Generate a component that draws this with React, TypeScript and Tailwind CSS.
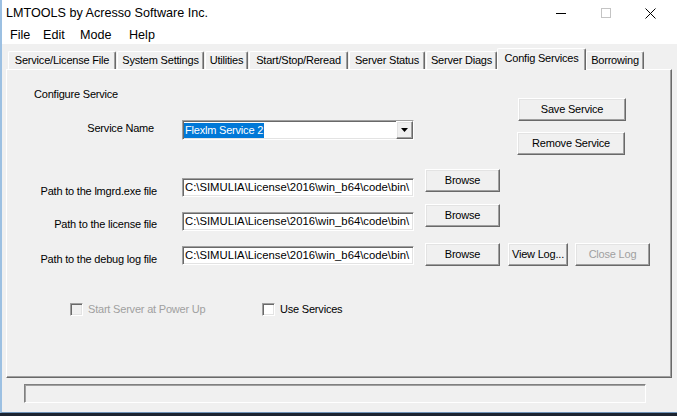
import React from "react";

const raised =
  "border border-t-white border-l-white border-r-[#696969] border-b-[#696969] shadow-[inset_-1px_-1px_0_#a0a0a0,inset_1px_1px_0_#e3e3e3] bg-[#f0f0f0] flex items-center justify-center text-[11px] tracking-[-0.2px] leading-[13px]";
const sunken =
  "border border-t-[#a0a0a0] border-l-[#a0a0a0] border-r-white border-b-white shadow-[inset_1px_1px_0_#696969,inset_-1px_-1px_0_#e3e3e3]";

const tabs = [
  { label: "Service/License File", cls: "w-[108px] mr-[1px]" },
  { label: "System Settings", cls: "w-[87px] mr-[1px]" },
  { label: "Utilities", cls: "w-[43px] mr-[1px]" },
  { label: "Start/Stop/Reread", cls: "w-[99px] mr-[1px]" },
  { label: "Server Status", cls: "w-[76px] mr-[1px]" },
  { label: "Server Diags", cls: "w-[71px]" },
  { label: "Config Services", cls: "w-[89px]", sel: true },
  { label: "Borrowing", cls: "w-[58px]" },
];

const PATH = "C:\\SIMULIA\\License\\2016\\win_b64\\code\\bin\\";

function PathInput({ cls }: { cls: string }) {
  return (
    <div className={`${sunken} ${cls} ml-[25px] w-[232px] h-[19px] bg-white overflow-hidden whitespace-nowrap flex items-center pl-[2px] text-[11.3px] tracking-normal leading-[13px]`}>
      {PATH}
    </div>
  );
}

export default function App() {
  return (
    <div className="w-[677px] h-[416px] bg-[#1c2430] overflow-hidden font-['Liberation_Sans',Arial,sans-serif] text-black select-none">
      <div className="h-[413px] bg-[#f0f0f0] border-l-2 border-l-[#9cc0e2] border-b border-b-[#6f93b8] flex flex-col">
        {/* Title bar */}
        <div className="h-[26px] bg-white flex items-center shrink-0">
          <span className="pl-[4px] text-[12.6px] leading-[16px]">LMTOOLS by Acresso Software Inc.</span>
          <div className="ml-auto flex h-full pr-[4px]">
            <div className="w-[45px] h-full flex items-center justify-center">
              <svg width="10" height="10" viewBox="0 0 10 10">
                <line x1="0" y1="5.5" x2="10" y2="5.5" stroke="#000" strokeWidth="1" />
              </svg>
            </div>
            <div className="w-[45px] h-full flex items-center justify-center">
              <svg width="10" height="10" viewBox="0 0 10 10">
                <rect x="0.5" y="0.5" width="9" height="9" fill="none" stroke="#c4c4c4" strokeWidth="1" />
              </svg>
            </div>
            <div className="w-[45px] h-full flex items-center justify-center">
              <svg width="11" height="11" viewBox="0 0 11 11">
                <line x1="0.5" y1="0.5" x2="10.5" y2="10.5" stroke="#000" strokeWidth="1" />
                <line x1="10.5" y1="0.5" x2="0.5" y2="10.5" stroke="#000" strokeWidth="1" />
              </svg>
            </div>
          </div>
        </div>
        {/* Menu bar */}
        <div className="h-[18px] bg-white flex items-center pl-[8px] text-[12.6px] leading-[16px] shrink-0">
          <span className="w-[33px]">File</span>
          <span className="w-[37px]">Edit</span>
          <span className="w-[49px]">Mode</span>
          <span>Help</span>
        </div>
        {/* Tabs */}
        <div className="h-[25px] flex items-end pl-[6px] shrink-0">
          {tabs.map((t) =>
            t.sel ? (
              <div
                key={t.label}
                className={`${t.cls} relative z-10 h-[22px] -mb-[1px] bg-[#f0f0f0] border-t border-l border-white border-r border-r-[#696969] rounded-t-[2px] shadow-[inset_-1px_0_0_#a0a0a0] flex items-start justify-center pt-[3px] text-[11px] tracking-[-0.2px] leading-[13px]`}
              >
                {t.label}
              </div>
            ) : (
              <div
                key={t.label}
                className={`${t.cls} h-[18px] bg-[#f0f0f0] border-t border-l border-white border-r border-r-[#696969] rounded-t-[2px] shadow-[inset_-1px_0_0_#a0a0a0] flex items-center justify-center text-[11px] tracking-[-0.2px] leading-[13px]`}
              >
                {t.label}
              </div>
            )
          )}
        </div>
        {/* Panel */}
        <div className="ml-[4px] w-[666px] h-[309px] border border-t-white border-l-white border-r-[#696969] border-b-[#696969] shadow-[inset_-1px_-1px_0_#a0a0a0] flex flex-col text-[11px] tracking-[-0.2px] leading-[13px] shrink-0">
          {/* Top section */}
          <div className="flex h-[86px]">
            <div className="w-[510px] flex flex-col">
              <div className="mt-[18px] pl-[27px]">Configure Service</div>
              <div className="mt-[19px] flex items-start h-[20px]">
                <div className="w-[147px] text-right mt-[2px]">Service Name</div>
                <div className={`${sunken} ml-[28px] w-[232px] h-[20px] bg-white flex items-center`}>
                  <div className="ml-[1px] h-[15px] bg-[#0078d7] text-white px-[1px] flex items-center">Flexlm Service 2</div>
                  <div className="ml-auto h-full w-[17px] border border-t-white border-l-white border-r-[#696969] border-b-[#696969] shadow-[inset_-1px_-1px_0_#a0a0a0,inset_1px_1px_0_#e3e3e3] bg-[#f0f0f0] flex items-center justify-center">
                    <svg width="7" height="4" viewBox="0 0 7 4">
                      <polygon points="0,0 7,0 3.5,4" fill="#000" />
                    </svg>
                  </div>
                </div>
              </div>
            </div>
            <div className="flex flex-col items-start">
              <div className={`${raised} mt-[28px] ml-[1px] w-[108px] h-[23px]`}>Save Service</div>
              <div className={`${raised} mt-[11px] w-[108px] h-[23px]`}>Remove Service</div>
            </div>
          </div>
          {/* Path rows */}
          <div className="mt-[13px] flex items-start h-[35px]">
            <div className="w-[150px] text-right mt-[16px]">Path to the lmgrd.exe file</div>
            <PathInput cls="mt-[9px]" />
            <div className={`${raised} ml-[11px] w-[75px] h-[23px]`}>Browse</div>
          </div>
          <div className="flex items-start h-[39px]">
            <div className="w-[150px] text-right mt-[14px]">Path to the license file</div>
            <PathInput cls="mt-[8px]" />
            <div className={`${raised} ml-[11px] w-[75px] h-[23px]`}>Browse</div>
          </div>
          <div className="flex items-start h-[23px]">
            <div className="w-[150px] text-right mt-[10px]">Path to the debug log file</div>
            <PathInput cls="mt-[3px]" />
            <div className={`${raised} ml-[11px] w-[75px] h-[23px]`}>Browse</div>
            <div className={`${raised} ml-[8px] w-[60px] h-[23px]`}>View Log...</div>
            <div className={`${raised} ml-[7px] w-[75px] h-[23px] text-[#a0a0a0]`}>Close Log</div>
          </div>
          {/* Checkboxes */}
          <div className="mt-[37px] flex items-center pl-[63px] h-[13px]">
            <div className="w-[192px] flex items-center">
              <div className={`${sunken} w-[13px] h-[13px] bg-[#f0f0f0]`} />
              <span className="ml-[5px] text-[#a0a0a0]">Start Server at Power Up</span>
            </div>
            <div className="flex items-center">
              <div className={`${sunken} w-[13px] h-[13px] bg-white`} />
              <span className="ml-[5px]">Use Services</span>
            </div>
          </div>
        </div>
        {/* Status bar */}
        <div className="mt-[6px] ml-[22px] w-[622px] h-[19px] border border-t-[#808080] border-l-[#808080] border-r-white border-b-white shadow-[inset_1px_1px_0_#a0a0a0] shrink-0" />
      </div>
    </div>
  );
}
